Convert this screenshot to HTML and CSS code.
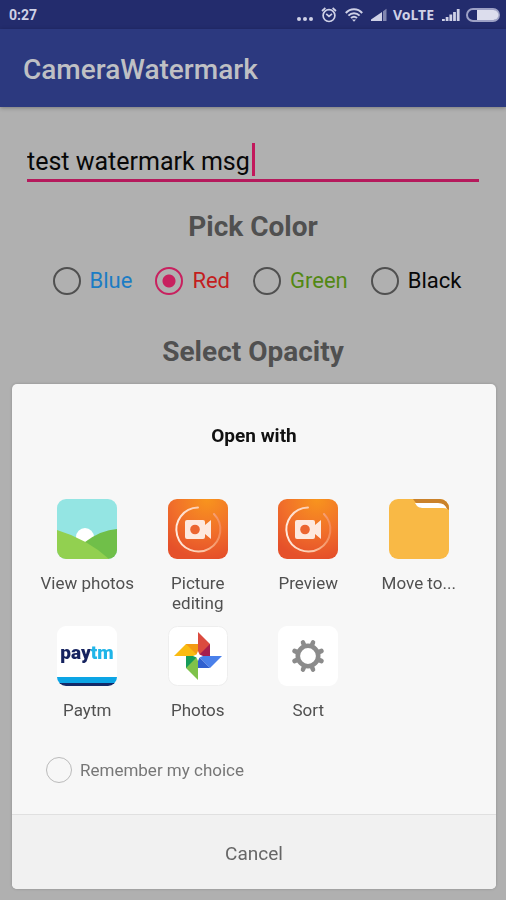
FILE: index.html
```
<!DOCTYPE html>
<html lang="en">

<head>
    <meta charset="UTF-8">
    <meta name="viewport" content="width=device-width, initial-scale=1.0">
    <title>CameraWatermark</title>
    <link rel="stylesheet" href="styles.css">
</head>

<body>
    <div class="status-bar">
        <span class="clock">0:27</span>
        <svg class="dots" width="16" height="16" viewBox="0 0 16 16" fill="currentColor">
            <circle cx="2" cy="12" r="2" />
            <circle cx="8" cy="12" r="2" />
            <circle cx="14" cy="12" r="2" />
        </svg>
        <svg class="alarm" width="16" height="16" viewBox="0 0 16 16" fill="none" stroke="currentColor" stroke-width="1.7">
            <circle cx="8" cy="8.6" r="5.9" />
            <path d="M1 4 4.4 1M15 4 11.6 1M5.2 6.8 8 9.3l3-2.5" />
        </svg>
        <svg class="wifi" width="18" height="14" viewBox="0 0 18 14" fill="none" stroke="currentColor" stroke-width="2">
            <path d="M.8 5C5.4.1 12.6.1 17.2 5M3.4 7.6c3.2-3.2 8-3.2 11.2 0M6 10.1c1.8-1.7 4.2-1.7 6 0" />
            <path d="M7 11.5h4L9 13.8z" fill="currentColor" stroke="none" />
        </svg>
        <svg class="signal" width="16" height="13" viewBox="0 0 16 13" fill="currentColor">
            <path d="M0 11.5 11 4v9H0z" />
            <path d="M12 3.2 15.5.8V13H12z" opacity=".55" />
        </svg>
        <span class="network">VoLTE</span>
        <svg class="signal" width="18" height="13" viewBox="0 0 18 13" fill="currentColor">
            <path d="M0 11h2.8v2H0zM3.7 9h2.8v4H3.7zM7.4 6.5h2.8V13H7.4zM11.1 4h2.8v9h-2.8zM14.8 1h2.8v12h-2.8z" />
        </svg>
        <svg class="battery" width="34" height="14" viewBox="0 0 34 14">
            <rect x="1" y="1" width="32" height="12" rx="6" fill="none" stroke="#9da1c5" stroke-width="2" />
            <path d="M11 2h16.500a5 5 0 0 1 0 10H11z" fill="#dcdded" />
        </svg>
    </div>

    <header class="app-bar">
        <h1>CameraWatermark</h1>
    </header>

    <main class="content">
        <div class="field">
            <input type="text" id="watermark" value="test watermark msg" aria-label="Watermark message">
            <span class="caret"></span>
        </div>

        <h2>Pick Color</h2>
        <div class="colors">
            <label class="blue"><input type="radio" name="color" value="blue">Blue</label>
            <label class="red"><input type="radio" name="color" value="red" checked>Red</label>
            <label class="green"><input type="radio" name="color" value="green">Green</label>
            <label class="black"><input type="radio" name="color" value="black">Black</label>
        </div>

        <h2>Select Opacity</h2>
    </main>

    <div class="dialog" role="dialog" aria-labelledby="dialog-title">
        <h3 id="dialog-title">Open with</h3>

        <div class="apps">
            <button type="button" class="app">
                <svg class="app-icon" viewBox="0 0 60 60">
                    <clipPath id="tile"><rect width="60" height="60" rx="9" /></clipPath>
                    <g clip-path="url(#tile)">
                        <rect width="60" height="60" fill="#94e5e3" />
                        <circle cx="28" cy="38" r="9" fill="#fff" />
                        <path d="M28 43Q44 31 60 30v30H28z" fill="#70bf49" />
                        <path d="M0 31q30 9 52 29H0z" fill="#92d050" />
                    </g>
                </svg>
                <span>View photos</span>
            </button>
            <button type="button" class="app">
                <svg class="app-icon" viewBox="0 0 60 60">
                    <defs>
                        <radialGradient id="flame" cx=".65" cy="0" r="1">
                            <stop offset="0" stop-color="#f8951d" />
                            <stop offset=".55" stop-color="#f1702a" />
                            <stop offset="1" stop-color="#e5502a" />
                        </radialGradient>
                        <linearGradient id="ring" x1="0" y1="0" x2="1" y2="0">
                            <stop offset="0" stop-color="#ffe9dc" />
                            <stop offset=".6" stop-color="#fbc7a8" />
                            <stop offset="1" stop-color="#f48a58" />
                        </linearGradient>
                    </defs>
                    <rect width="60" height="60" rx="9" fill="url(#flame)" />
                    <path d="M30 8.500A22 22 0 1 0 46 15" fill="none" stroke="url(#ring)" stroke-width="2" stroke-linecap="round" />
                    <path d="M19 21h16q2 0 2 2v3l6-5v19l-6-5v3q0 2-2 2H19q-2 0-2-2V23q0-2 2-2z" fill="#fde9df" />
                    <circle cx="27" cy="30.500" r="4.800" fill="#ec6530" />
                </svg>
                <span>Picture editing</span>
            </button>
            <button type="button" class="app">
                <svg class="app-icon" viewBox="0 0 60 60">
                    <rect width="60" height="60" rx="9" fill="url(#flame)" />
                    <path d="M30 8.500A22 22 0 1 0 46 15" fill="none" stroke="url(#ring)" stroke-width="2" stroke-linecap="round" />
                    <path d="M19 21h16q2 0 2 2v3l6-5v19l-6-5v3q0 2-2 2H19q-2 0-2-2V23q0-2 2-2z" fill="#fde9df" />
                    <circle cx="27" cy="30.500" r="4.800" fill="#ec6530" />
                </svg>
                <span>Preview</span>
            </button>
            <button type="button" class="app">
                <svg class="app-icon" viewBox="0 0 60 60">
                    <g clip-path="url(#tile)">
                        <rect width="60" height="60" fill="#f9b945" />
                        <path d="M24 0h36v11q-2-2-5-2H33q-4 0-6-5z" fill="#ca822b" />
                        <path d="M26 4h23q7 0 9 6-2-1-4-1H33q-3 0-5-2z" fill="#fff" />
                    </g>
                </svg>
                <span>Move to...</span>
            </button>
            <button type="button" class="app">
                <svg class="app-icon" viewBox="0 0 60 60">
                    <g clip-path="url(#tile)">
                        <rect width="60" height="60" fill="#fff" />
                        <rect y="51" width="60" height="6" fill="#0ca5e5" />
                        <rect y="57" width="60" height="3" fill="#132968" />
                    </g>
                    <text class="paytm-logo" x="30" y="33" text-anchor="middle" fill="#16235f">pay<tspan fill="#20b5e8">tm</tspan></text>
                </svg>
                <span>Paytm</span>
            </button>
            <button type="button" class="app">
                <svg class="app-icon" viewBox="0 0 60 60">
                    <rect x=".5" y=".5" width="59" height="59" rx="9" fill="#fff" stroke="#eee" />
                    <path d="M30 6v24h12V18z" fill="#db4b3f" />
                    <path d="M30 30 42 18v12z" fill="#a61e4d" />
                    <path d="M6 30 18 18h12v12z" fill="#fabb12" />
                    <path d="M18 18h12v12z" fill="#f49a14" />
                    <path d="M30 30h24L42 42z" fill="#4a80ea" />
                    <path d="M30 30v12h12z" fill="#3060cf" />
                    <path d="M18 30h12v24L18 42z" fill="#7fc24a" />
                    <path d="M18 30h12L18 42z" fill="#169b59" />
                    <path d="m30 25 1.500 3.500L35 30l-3.500 1.500L30 35l-1.500-3.500L25 30l3.500-1.500z" fill="#fff" />
                </svg>
                <span>Photos</span>
            </button>
            <button type="button" class="app">
                <svg class="app-icon" viewBox="0 0 60 60">
                    <rect width="60" height="60" rx="9" fill="#fff" />
                    <circle cx="30" cy="30" r="10.200" fill="none" stroke="#8b8b8b" stroke-width="4.600" />
                    <path d="m26 19-1-2.500M34 19l1-2.500M26 41l-1 2.500M34 41l1 2.500M19 26l-2.500-1M19 34l-2.500 1M41 26l2.500-1M41 34l2.500 1" stroke="#8b8b8b" stroke-width="4.600" stroke-linecap="round" />
                </svg>
                <span>Sort</span>
            </button>
        </div>

        <label class="remember"><input type="checkbox">Remember my choice</label>

        <button type="button" class="cancel">Cancel</button>
    </div>
</body>

</html>
```
FILE: styles.css
```
* {
    box-sizing: border-box;
}

body {
    margin: 0;
    min-height: 100vh;
    background-color: #b0b0b0;
    font-family: Roboto, sans-serif;
}

h1,
h2,
h3 {
    margin: 0;
}

.status-bar {
    display: flex;
    align-items: center;
    height: 29px;
    padding: 0 6px 0 9px;
    background-color: #232c6d;
    color: #cfd1e6;
}

.clock {
    margin-right: auto;
    font-size: 14px;
    font-weight: 700;
}

.alarm,
.wifi,
.signal {
    margin-left: 8px;
}

.network {
    margin-left: 6px;
    font-family: "Noto Sans", sans-serif;
    font-size: 14px;
    font-weight: 700;
}

.battery {
    margin-left: 6px;
}

.app-bar {
    display: flex;
    align-items: center;
    height: 78px;
    padding: 2px 23px 0;
    background-color: #2c397f;
    color: #bfc0c4;
    box-shadow: 0 1px 4px rgba(0, 0, 0, 0.3);
}

.app-bar h1 {
    font-size: 28px;
    font-weight: 500;
}

.content {
    padding: 32px 27px;
}

.field {
    position: relative;
}

.field input {
    display: block;
    width: 100%;
    height: 43px;
    padding: 4px 0 0;
    border: none;
    border-bottom: 3px solid #b51a5c;
    background: none;
    color: #080808;
    font-family: inherit;
    font-size: 25px;
    outline: none;
}

.caret {
    position: absolute;
    top: 4px;
    left: 225px;
    width: 3px;
    height: 33px;
    background-color: #c2185b;
}

.content h2 {
    margin-top: 28px;
    color: #505050;
    font-size: 28px;
    font-weight: 700;
    line-height: 34px;
    text-align: center;
}

.colors {
    display: flex;
    justify-content: center;
    gap: 23px;
    margin: 20px 0 37px;
    padding-left: 8px;
}

.colors label {
    display: flex;
    align-items: center;
    gap: 9px;
    font-size: 22px;
    line-height: 34px;
}

.colors input {
    width: 28px;
    height: 28px;
    margin: 0;
    appearance: none;
    border: 2px solid #505050;
    border-radius: 50%;
}

.colors input:checked {
    border-color: #c8215f;
    background: radial-gradient(circle, #c8215f 6px, transparent 7px);
}

.colors + h2 {
    margin-top: 0;
}

.blue {
    color: #1c7cc4;
}

.red {
    color: #c31e1e;
}

.green {
    color: #528814;
}

.black {
    color: #080808;
}

.dialog {
    position: fixed;
    right: 10px;
    bottom: 11px;
    left: 12px;
    overflow: hidden;
    border-radius: 5px;
    background-color: #f7f7f7;
    box-shadow: 0 0 3px rgba(0, 0, 0, 0.2);
}

.dialog h3 {
    padding: 40px 0 51px;
    color: #111;
    font-size: 19px;
    font-weight: 700;
    line-height: 24px;
    text-align: center;
}

.apps {
    display: grid;
    grid-template-columns: repeat(4, 1fr);
    row-gap: 13px;
    padding: 0 22px 0 20px;
}

.app {
    display: flex;
    flex-direction: column;
    align-items: center;
    gap: 14px;
    padding: 0 8px;
    border: none;
    background: none;
    color: #505050;
    font-family: inherit;
    font-size: 17px;
    line-height: 20px;
    cursor: pointer;
}

.app-icon {
    width: 60px;
    height: 60px;
}

.paytm-logo {
    font-family: Roboto, sans-serif;
    font-size: 19px;
    font-weight: 900;
}

.remember {
    display: flex;
    align-items: center;
    gap: 8px;
    margin: 37px 34px 31px;
    color: #777;
    font-size: 17px;
    line-height: 26px;
}

.remember input {
    width: 26px;
    height: 26px;
    margin: 0;
    appearance: none;
    border: 1px solid #bbb;
    border-radius: 50%;
}

.cancel {
    display: block;
    width: 100%;
    height: 75px;
    padding: 2px 0 0;
    border: none;
    border-top: 1px solid #e0e0e0;
    background-color: #f1f1f1;
    color: #666;
    font-family: inherit;
    font-size: 19px;
    cursor: pointer;
}
```
